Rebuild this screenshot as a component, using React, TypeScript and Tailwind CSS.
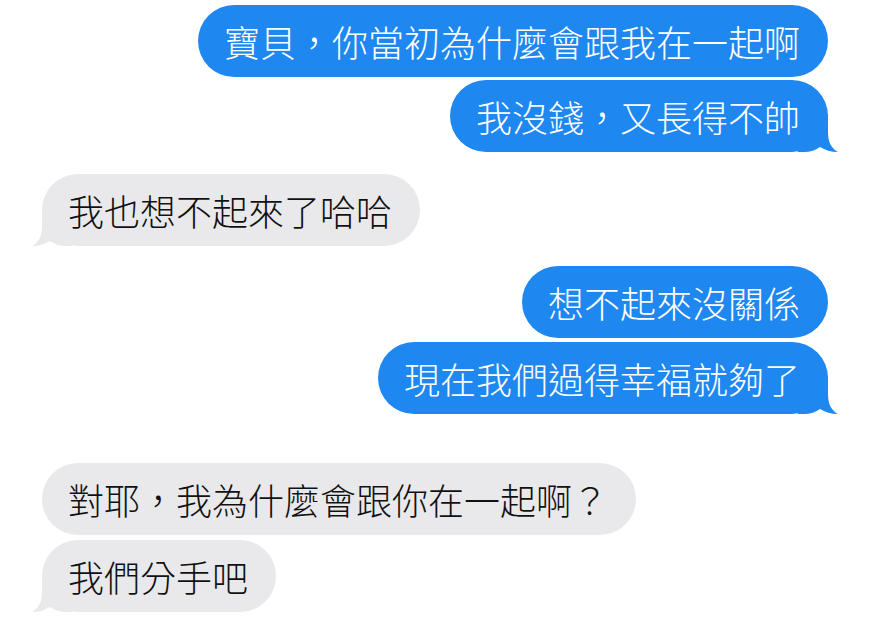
const font = { fontFamily: '"Noto Sans CJK TC", "Noto Sans CJK SC", sans-serif' };

type Msg = { text: string; me: boolean; tail: boolean; gap: string };

const messages: Msg[] = [
  { text: "寶貝，你當初為什麼會跟我在一起啊", me: true, tail: false, gap: "mt-[5px]" },
  { text: "我沒錢，又長得不帥", me: true, tail: true, gap: "mt-[3px]" },
  { text: "我也想不起來了哈哈", me: false, tail: true, gap: "mt-[22px]" },
  { text: "想不起來沒關係", me: true, tail: false, gap: "mt-[20px]" },
  { text: "現在我們過得幸福就夠了", me: true, tail: true, gap: "mt-[4px]" },
  { text: "對耶，我為什麼會跟你在一起啊？", me: false, tail: false, gap: "mt-[49px]" },
  { text: "我們分手吧", me: false, tail: true, gap: "mt-[5px]" },
];

function Tail({ me }: { me: boolean }) {
  return (
    <svg
      width="40"
      height="38"
      viewBox="0 0 40 38"
      className={
        me
          ? "absolute bottom-0 right-[-10px] fill-[#1f87f0]"
          : "absolute bottom-0 left-[-10px] -scale-x-100 fill-[#e9e9eb]"
      }
    >
      <path d="M0 0H30V18C30 28 33 34 40 38C33 38 27 36 22 33C18 36 12 38 6 38H0Z" />
    </svg>
  );
}

function Bubble({ msg }: { msg: Msg }) {
  return (
    <div
      className={`relative flex h-[72px] items-center rounded-[36px] pl-[26px] pr-[28px] text-[36px] font-light leading-none ${msg.gap} ${
        msg.me
          ? "self-end mr-[42px] bg-[#1f87f0] text-white"
          : "self-start ml-[42px] bg-[#e9e9eb] text-[#111]"
      }`}
    >
      {msg.tail && <Tail me={msg.me} />}
      <span className="relative whitespace-nowrap">{msg.text}</span>
    </div>
  );
}

export default function App() {
  return (
    <main className="flex h-[636px] w-[870px] flex-col overflow-hidden bg-white" style={font}>
      {messages.map((m, i) => (
        <Bubble key={i} msg={m} />
      ))}
    </main>
  );
}
